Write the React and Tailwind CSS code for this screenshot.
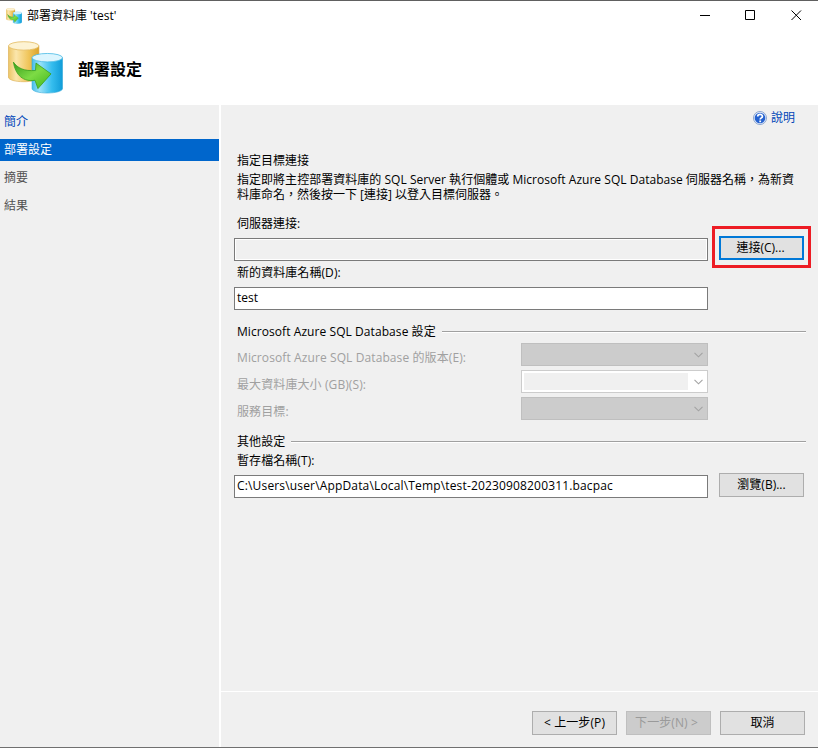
import clsx from "clsx"

// Sidebar steps of the wizard
const steps = [
  { label: "簡介", style: "text-[#0046b8]" },
  { label: "部署設定", style: "bg-[#0066cc] text-white" },
  { label: "摘要", style: "text-[#505050]" },
  { label: "結果", style: "text-[#505050]" },
]

// Disabled Azure options
const azureOptions = [
  { label: "Microsoft Azure SQL Database 的版本(E):" },
  { label: "最大資料庫大小 (GB)(S):", editable: true },
  { label: "服務目標:" },
]

function DatabaseIcon({ className }) {
  return (
    <svg className={className} viewBox="0 0 56 54" preserveAspectRatio="none">
      <defs>
        <linearGradient id="gold">
          <stop offset="0" stopColor="#ecc566" />
          <stop offset="0.25" stopColor="#fbe6ac" />
          <stop offset="0.65" stopColor="#f0c65c" />
          <stop offset="1" stopColor="#dba32a" />
        </linearGradient>
        <linearGradient id="blue">
          <stop offset="0" stopColor="#45bdea" />
          <stop offset="0.25" stopColor="#9be2fa" />
          <stop offset="0.65" stopColor="#35bdee" />
          <stop offset="1" stopColor="#109cd8" />
        </linearGradient>
        <linearGradient id="green" x2="1" y2="1">
          <stop offset="0" stopColor="#3a9d1c" />
          <stop offset="0.5" stopColor="#7ddb45" />
          <stop offset="1" stopColor="#3fb51c" />
        </linearGradient>
      </defs>
      <path d="M.5 5v32c0 2.600 7 4.500 15.500 4.500s15.500-1.900 15.500-4.500V5z" fill="url(#gold)" stroke="#d9aa48" strokeWidth="0.6" />
      <ellipse cx="16" cy="5" rx="15.500" ry="4.300" fill="#fdf3d3" stroke="#e3b95a" strokeWidth="0.8" />
      <path d="M24.500 17v31.500c0 2.600 7 4.500 15.500 4.500s15.500-1.900 15.500-4.500V17z" fill="url(#blue)" stroke="#2ba6d8" strokeWidth="0.6" />
      <ellipse cx="40" cy="17" rx="15.500" ry="4.300" fill="#dcf5fe" stroke="#45b9e4" strokeWidth="0.8" />
      <path d="M5.500 21.500c4 6 11 9.500 22.500 8.500l.5-7.500L43.800 33.500 30.500 48.500l-3-8.500C16 42 7.500 35 5.500 21.500z" fill="url(#green)" stroke="#389f1c" strokeWidth="0.8" />
    </svg>
  )
}

function HelpIcon() {
  return (
    <svg className="size-[14px]" viewBox="0 0 14 14">
      <circle cx="7" cy="7" r="6.500" fill="#e8effb" stroke="#7f9ccb" strokeWidth="0.9" />
      <circle cx="7" cy="7" r="5.300" fill="#2562d0" />
      <path d="M4.700 5.500C4.800 2.800 9.400 2.800 9.400 5.400 9.400 7 7.200 6.800 7.200 8.600" fill="none" stroke="white" strokeWidth="1.700" />
      <rect x="6.300" y="9.500" width="1.800" height="1.700" fill="white" />
    </svg>
  )
}

function Button({ children, className, disabled }) {
  return (
    <button
      disabled={disabled}
      className={clsx(
        "flex h-6 w-[85px] shrink-0 items-center justify-center whitespace-pre",
        disabled ? "border border-[#bfbfbf] bg-[#cccccc] text-[#9a9a9a]" : "bg-[#e1e1e1]",
        className
      )}
    >
      {children}
    </button>
  )
}

function SectionTitle({ children, className }) {
  return (
    <div className={clsx("flex h-4 items-center gap-[6px]", className)}>
      <span className="pt-[2px] tracking-[0.07px]">{children}</span>
      <div className="mt-[2px] h-[2px] grow border-t border-[#a0a0a0] bg-white" />
    </div>
  )
}

function Combo({ editable }) {
  return (
    <div
      className={clsx(
        "flex h-[23px] w-[187px] items-center justify-between border pr-1",
        editable ? "border-[#cccccc] bg-white pl-[2px]" : "border-[#bfbfbf] bg-[#cccccc]"
      )}
    >
      <div className={clsx("h-[17px] w-[164px]", editable && "bg-[#f0f0f0]")} />
      <svg className="h-[6px] w-[9px]" viewBox="0 0 9 6" fill="none" stroke="#a3a3a3" strokeWidth="1.100">
        <path d="M.5.8l4 4 4-4" />
      </svg>
    </div>
  )
}

export default function App() {
  return (
    <div className="flex h-[748px] w-[818px] flex-col border-y border-t-[#606060] border-b-[#707070] bg-white font-['Open_Sans','Noto_Sans_CJK_TC',sans-serif] text-[12px] leading-4 text-black">
      {/* Title bar */}
      <div className="flex h-[29px] shrink-0 items-center pl-[6px]">
        <DatabaseIcon className="size-4" />
        <span className="ml-[5px] grow">部署資料庫 'test'</span>
        <svg className="mr-4 h-[11px] w-[102px]" viewBox="0 0 102 11" fill="none" stroke="black">
          <path d="M0 5.500h10" />
          <path d="M45.500.5h9v9h-9z" />
          <path d="M91.500.5l9.500 9.500m0-9.500l-9.500 9.500" />
        </svg>
      </div>

      <div className="flex h-[75px] shrink-0 items-center pl-2">
        <DatabaseIcon className="h-[53px] w-[55px]" />
        <h1 className="mt-[3px] ml-[15px] text-[16px] font-bold">部署設定</h1>
      </div>

      <div className="flex min-h-0 grow bg-[#f0f0f0]">
        <nav className="flex w-[221px] shrink-0 flex-col gap-[6px] border-r-2 border-white pt-[6px]">
          {steps.map((step) => (
            <div key={step.label} className={clsx("flex h-[22px] items-center pl-1", step.style)}>
              {step.label}
            </div>
          ))}
        </nav>

        <main className="flex grow flex-col">
          <div className="flex grow flex-col pr-3 pl-[13px]">
            <div className="flex h-[26px] items-center justify-end gap-1 pr-[11px] text-[#0046b8]">
              <HelpIcon />
              <span>說明</span>
            </div>

            <div className="mt-[22px] pl-[3px]">
              <h2>指定目標連接</h2>
              <p className="mt-[3px] leading-[15px] whitespace-nowrap">
                <span className="tracking-[0.03px]">
                  指定即將主控部署資料庫的 SQL Server 執行個體或 Microsoft Azure SQL Database 伺服器名稱，為新資
                </span>
                <br />
                料庫命名，然後按一下 [連接] 以登入目標伺服器。
              </p>
              <p className="mt-[14px]">伺服器連接:</p>
            </div>

            {/* Server connection, with the connect button marked in red */}
            <div className="mt-[6px] flex h-[23px]">
              <div className="w-[474px] border border-[#7a7a7a] bg-[#f0f0f0] shadow-[inset_0_0_0_1px_white]" />
              <div className="mt-[-12px] mr-[-5px] ml-1 h-[42px] w-[99px] shrink-0 border-[3px] border-[#ed1c24] px-1 py-[7px]">
                <Button className="border-2 border-[#0078d7] pr-[2px]">連接(C)...</Button>
              </div>
            </div>

            <p className="mt-1 pl-[3px] tracking-[0.07px]">新的資料庫名稱(D):</p>
            <div className="mt-[6px] flex h-[23px] w-[474px] items-center border border-[#7a7a7a] bg-white pb-px pl-[2px]">
              test
            </div>

            <SectionTitle className="mt-[13px] pl-[3px]">Microsoft Azure SQL Database 設定</SectionTitle>
            <div className="mt-1 flex flex-col gap-1">
              {azureOptions.map((option) => (
                <div key={option.label} className="flex h-[23px] text-[#a0a0a0]">
                  <span className="w-[287px] pt-[7px] pl-[3px] tracking-[0.1px]">{option.label}</span>
                  <Combo editable={option.editable} />
                </div>
              ))}
            </div>

            <SectionTitle className="mt-[13px] pl-[3px]">其他設定</SectionTitle>
            <p className="mt-1 pl-[3px] tracking-[0.07px]">暫存檔名稱(T):</p>
            <div className="mt-1 flex gap-[11px]">
              <div className="mt-[2px] flex h-[23px] w-[474px] items-center border border-[#7a7a7a] bg-white pb-px pl-[2px] tracking-[0.16px]">
                C:\Users\user\AppData\Local\Temp\test-20230908200311.bacpac
              </div>
              <Button className="border border-[#adadad]">瀏覽(B)...</Button>
            </div>
          </div>

          <div className="flex h-[56px] shrink-0 items-start justify-end gap-[9px] border-t border-white pt-[19px] pr-[13px]">
            <Button className="border border-[#adadad] tracking-[0.1px]">{"< 上一步(P)"}</Button>
            <Button disabled className="pr-1 tracking-[0.1px]">{"下一步(N) >"}</Button>
            <Button className="border border-[#adadad]">取消</Button>
          </div>
        </main>
      </div>
    </div>
  )
}
